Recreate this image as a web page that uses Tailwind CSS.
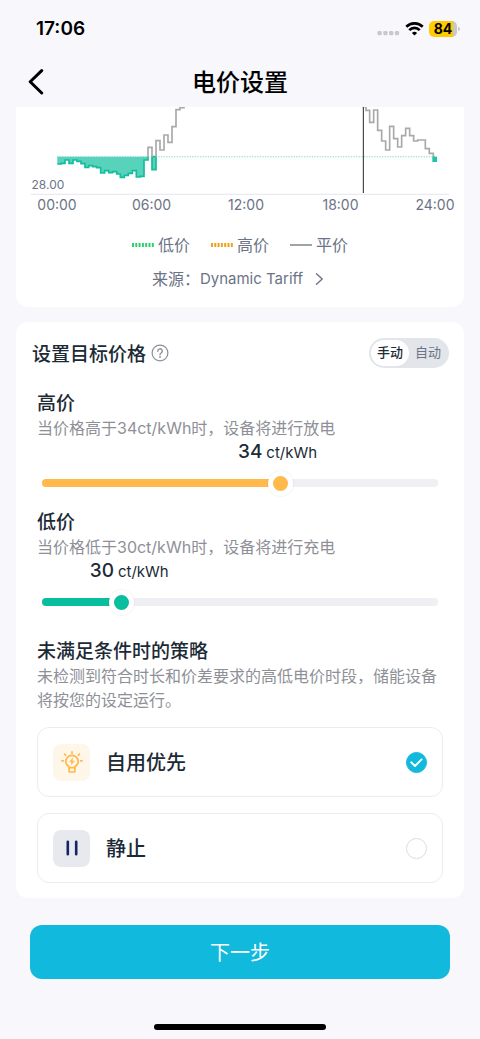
<!DOCTYPE html>
<html lang="zh-CN">
<head>
<meta charset="utf-8">
<meta name="viewport" content="width=device-width, initial-scale=1">
<title>电价设置</title>
<script src="https://cdn.jsdelivr.net/npm/@tailwindcss/browser@4"></script>
</head>
<body class="min-h-screen flex flex-col bg-[#f7f7fc] text-[#1c2a36] font-[Inter,'Noto_Sans_CJK_SC',sans-serif]">

<!-- Status bar -->
<div class="h-[58px] pl-9 pr-5 flex items-center justify-between text-black">
  <span class="text-[19px] leading-7 font-semibold">17:06</span>
  <div class="flex items-center gap-[5px]">
    <svg class="w-[23px] h-4" viewBox="0 0 23 16" fill="#c8c8cc" aria-hidden="true">
      <rect x="0.5" y="10" width="4.2" height="4.2" rx="1.3"/><rect x="6.3" y="10" width="4.2" height="4.2" rx="1.3"/><rect x="12.1" y="10" width="4.2" height="4.2" rx="1.3"/><rect x="17.9" y="10" width="4.2" height="4.2" rx="1.3"/>
    </svg>
    <svg class="w-[19px] h-[14px]" viewBox="0 0 19 14" fill="none" stroke="#000" stroke-width="2.7" aria-hidden="true">
      <path d="M1.3 4.700A11.7 11.7 0 0 1 17.7 4.700"/><path d="M4.300 8.100A7.300 7.300 0 0 1 14.700 8.100"/><path d="M9.5 13.6 6.9 11A3.7 3.7 0 0 1 12.1 11Z" fill="#000" stroke="none"/>
    </svg>
    <div class="flex items-center gap-px">
      <span class="h-4 w-7 rounded-[5px] bg-linear-to-r from-[#ffcc00] from-84% to-[#c8c8cc] to-84% text-sm leading-4 font-bold text-center">84</span>
      <span class="w-[2px] h-1 rounded-r-full bg-[#c8c8cc]"></span>
    </div>
  </div>
</div>

<!-- Navigation -->
<header class="h-[49px] px-6 grid grid-cols-[24px_1fr_24px] items-center text-black">
  <button type="button" aria-label="返回" class="h-8 w-6 flex items-center justify-center">
    <svg class="w-6 h-7" viewBox="0 0 24 28" fill="none" stroke="currentColor" stroke-width="3" stroke-linecap="round" stroke-linejoin="round"><path d="M17.7 1.600 6.2 12.800 17.7 24"/></svg>
  </button>
  <h1 class="text-2xl leading-8 font-medium text-center">电价设置</h1>
</header>

<main class="px-4 flex flex-col">
  <!-- Price chart -->
  <section class="bg-white rounded-b-xl pb-4 text-[#6b7386]">
    <svg class="block w-full" viewBox="16 107 448 88" fill="none" role="img" aria-label="电价曲线">
      <path d="M31 194.4H449" stroke="#e9eaf2" stroke-width="1.2"/>
      <path d="M57 156.8H435" stroke="#0fbf9f" stroke-opacity=".55" stroke-width="1" stroke-dasharray="1.3 1.3"/>
      <g transform="translate(10 100) scale(.33333)" stroke-width="5">
        <path d="M142 170V192H154V190H165V180H177V190H189V180H201V184H213V191H225V202H236V197H248V200H260V203H272V219H284V212H296V218H308V215H320V222H331V232H343V226H355V220H367V212H379V231H390V229H402V180H414V170Z" fill="#57d2bb"/>
        <path d="M142 192H154V190H165V180H177V190H189V180H201V184H213V191H225V202H236V197H248V200H260V203H272V219H284V212H296V218H308V215H320V222H331V232H343V226H355V220H367V212H379V231H390V229H402V180H414V170" stroke="#13bd9b"/>
        <path d="M426 170H438V209H426Z" fill="#57d2bb" stroke="#13bd9b"/>
        <path d="M414 172V142H426V172M438 172V122H450V150H462V105H474V127H486V80H498V29H510V23H522V18" stroke="#a9a9a9"/>
      </g>
      <g transform="translate(240 100) scale(.33333)" stroke-width="5">
        <path d="M367 20H378V31H389V67H401V30H413V91H425V123H437V150H449V79H461V116H473V141H485V107H497V85H509V107H521V123H533V120H556V146H568V160H580V172" stroke="#a9a9a9"/>
        <path d="M577 170H591V186H577Z" fill="#20c4a4"/>
      </g>
      <path d="M363.4 107V193" stroke="#4a4a4f" stroke-width="1.2"/>
      <text x="31.500" y="188.500" class="text-xs fill-[#6b7386]">28.00</text>
    </svg>
    <div class="h-5 pl-[21px] pr-[9px] flex items-center justify-between text-sm text-center">
      <span class="w-10">00:00</span><span class="w-10">06:00</span><span class="w-10">12:00</span><span class="w-10">18:00</span><span class="w-10">24:00</span>
    </div>
    <div class="mt-[18px] h-6 flex items-center justify-center gap-[21px] text-base">
      <span class="flex items-center gap-1"><svg class="w-[22px] h-1" viewBox="0 0 22 4" aria-hidden="true"><path d="M0 2H22" stroke="#2fcf6d" stroke-width="4" stroke-dasharray="2 1.3"/></svg>低价</span>
      <span class="flex items-center gap-1"><svg class="w-[22px] h-1" viewBox="0 0 22 4" aria-hidden="true"><path d="M0 2H22" stroke="#eda21c" stroke-width="4" stroke-dasharray="2 1.3"/></svg>高价</span>
      <span class="flex items-center gap-1"><svg class="w-[22px] h-1" viewBox="0 0 22 4" aria-hidden="true"><path d="M0 2H22" stroke="#a3a3a3" stroke-width="2"/></svg>平价</span>
    </div>
    <a href="#source" class="mt-[10px] h-6 pr-1 flex items-center justify-center text-base">
      来源：<span class="text-[15px]">Dynamic Tariff</span>
      <svg class="ml-3 w-[9px] h-3" viewBox="0 0 9 12" fill="none" stroke="currentColor" stroke-width="1.4" stroke-linecap="round" stroke-linejoin="round" aria-hidden="true"><path d="M1.500 .8 7.200 6 1.500 11.200"/></svg>
    </a>
  </section>

  <!-- Target price -->
  <section class="mt-[15px] bg-white rounded-xl pt-4 pb-[15px]">
    <div class="h-[30px] pl-4 pr-[15px] flex items-center justify-between">
      <div class="flex items-center gap-[5px]">
        <h2 class="pt-[3px] text-[19px] leading-7 font-medium">设置目标价格</h2>
        <button type="button" aria-label="帮助">
          <svg class="block w-[18px] h-[18px]" viewBox="0 0 18 18" fill="none" stroke="#8b8f98" stroke-width="1.2" stroke-linecap="round"><circle cx="9" cy="9" r="7.900"/><path d="M6.800 7.200A2.250 2.250 0 1 1 10.200 9C9.400 9.500 9 9.900 9 10.700" stroke-width="1.400"/><circle cx="9" cy="13" r=".9" fill="#8b8f98" stroke="none"/></svg>
        </button>
      </div>
      <div class="h-[30px] p-[2px] rounded-full bg-[#e2e5ea] flex text-[13px]">
        <button type="button" aria-pressed="true" class="w-[38px] rounded-full bg-white font-medium">手动</button>
        <button type="button" aria-pressed="false" class="w-[38px] rounded-full text-[#6b7386]">自动</button>
      </div>
    </div>

    <div class="mt-[24px] px-[21px] flex flex-col">
      <label for="high" class="text-[19px] leading-6 font-medium">高价</label>
      <p class="text-base leading-6 text-[#8e9097]">当价格高于34ct/kWh时，设备将进行放电</p>
      <div class="h-6 flex items-baseline gap-1 leading-6" style="margin-left:49.5%"><span class="text-[19px] leading-6 font-medium">34</span><span class="text-[15px] leading-6">ct/kWh</span></div>
      <div class="h-[38px] grid items-center">
        <div class="[grid-area:1/1] mx-[5px] h-2 rounded-full bg-[#efeff4] overflow-hidden"><div class="h-2 bg-[#ffba4b]" style="width:60%"></div></div>
        <input id="high" type="range" min="28" max="38" value="34" class="[grid-area:1/1] -ml-[7px] -mr-2 appearance-none bg-transparent h-[25px] [&::-webkit-slider-thumb]:appearance-none [&::-webkit-slider-thumb]:size-[25px] [&::-webkit-slider-thumb]:rounded-full [&::-webkit-slider-thumb]:border-5 [&::-webkit-slider-thumb]:border-white [&::-webkit-slider-thumb]:bg-[#ffba4b] [&::-webkit-slider-thumb]:shadow-[0_0_1px_1px_#0000000a]">
      </div>

      <label for="low" class="mt-[9px] text-[19px] leading-6 font-medium">低价</label>
      <p class="text-base leading-6 text-[#8e9097]">当价格低于30ct/kWh时，设备将进行充电</p>
      <div class="h-6 flex items-baseline gap-1 leading-6" style="margin-left:13%"><span class="text-[19px] leading-6 font-medium">30</span><span class="text-[15px] leading-6">ct/kWh</span></div>
      <div class="h-[38px] grid items-center">
        <div class="[grid-area:1/1] mx-[5px] h-2 rounded-full bg-[#efeff4] overflow-hidden"><div class="h-2 bg-[#09be9e]" style="width:20%"></div></div>
        <input id="low" type="range" min="28" max="38" value="30" class="[grid-area:1/1] -ml-[7px] -mr-2 appearance-none bg-transparent h-[25px] [&::-webkit-slider-thumb]:appearance-none [&::-webkit-slider-thumb]:size-[25px] [&::-webkit-slider-thumb]:rounded-full [&::-webkit-slider-thumb]:border-5 [&::-webkit-slider-thumb]:border-white [&::-webkit-slider-thumb]:bg-[#09be9e] [&::-webkit-slider-thumb]:shadow-[0_0_1px_1px_#0000000a]">
      </div>

      <h3 class="mt-[19px] text-[19px] leading-6 font-medium">未满足条件时的策略</h3>
      <p class="-mr-2 text-base leading-6 text-[#8e9097]">未检测到符合时长和价差要求的高低电价时段，储能设备将按您的设定运行。</p>

      <div class="mt-[15px] flex flex-col gap-4" role="radiogroup" aria-label="未满足条件时的策略">
        <label for="self" class="h-[70px] px-[15px] border border-[#ececef] rounded-xl flex items-center">
          <span class="size-[37px] rounded-lg bg-[#fff6ea] flex items-center justify-center">
            <svg class="size-[22px]" viewBox="0 0 22 22" fill="none" stroke="#ffba4b" stroke-width="1.700" stroke-linecap="round" stroke-linejoin="round" aria-hidden="true"><path d="M8 16.600V15.400C6 14.400 4.800 12.600 4.800 10.500A6.200 6.200 0 0 1 17.200 10.500C17.200 12.600 16 14.400 14 15.400V16.600ZM8 16.600V20A1 1 0 0 0 9 21H13A1 1 0 0 0 14 20V16.600M11 .9V2.200M3.600 3.100 4.600 4.100M18.400 3.100 17.400 4.100M.9 9.800H2.300M19.700 9.800H21.100"/><path d="M11.600 7 8.700 11H10.700L10.400 13.700 13.300 9.900H11.300Z" fill="#ffba4b" stroke-width=".5"/></svg>
          </span>
          <span class="ml-4 flex-1 pt-[2px] text-xl font-medium">自用优先</span>
          <span class="grid size-[21px]">
            <input id="self" name="strategy" type="radio" checked class="peer [grid-area:1/1] appearance-none size-[21px] rounded-full border border-[#dcdce0] checked:border-[#11b9dc] checked:bg-[#11b9dc]">
            <svg class="[grid-area:1/1] size-[21px] invisible peer-checked:visible pointer-events-none" viewBox="0 0 21 21" fill="none" stroke="#fff" stroke-width="1.900" stroke-linecap="round" stroke-linejoin="round" aria-hidden="true"><path d="M5.200 10.300 9 14 15.600 7.400"/></svg>
          </span>
        </label>
        <label for="idle" class="h-[70px] px-[15px] border border-[#ececef] rounded-xl flex items-center">
          <span class="size-[37px] rounded-lg bg-[#e8e9ef] flex items-center justify-center">
            <svg class="size-[22px]" viewBox="0 0 22 22" fill="none" stroke="#12275f" stroke-width="2.600" stroke-linecap="round" aria-hidden="true"><path d="M6.800 4.800V17.200M15.200 4.800V17.200"/></svg>
          </span>
          <span class="ml-4 flex-1 pt-[2px] text-xl font-medium">静止</span>
          <span class="grid size-[21px]">
            <input id="idle" name="strategy" type="radio" class="peer [grid-area:1/1] appearance-none size-[21px] rounded-full border border-[#dcdce0] checked:border-[#11b9dc] checked:bg-[#11b9dc]">
            <svg class="[grid-area:1/1] size-[21px] invisible peer-checked:visible pointer-events-none" viewBox="0 0 21 21" fill="none" stroke="#fff" stroke-width="1.900" stroke-linecap="round" stroke-linejoin="round" aria-hidden="true"><path d="M5.200 10.300 9 14 15.600 7.400"/></svg>
          </span>
        </label>
      </div>
    </div>
  </section>

  <button type="button" class="mt-[27px] mx-[14px] h-[54px] pt-[2px] rounded-xl bg-[#11b9dc] text-white text-xl">下一步</button>
</main>

<!-- Home indicator -->
<div class="mt-auto pt-6 pb-[9px] flex justify-center"><div class="w-[172px] h-[6px] rounded-full bg-black"></div></div>
</body>
</html>
